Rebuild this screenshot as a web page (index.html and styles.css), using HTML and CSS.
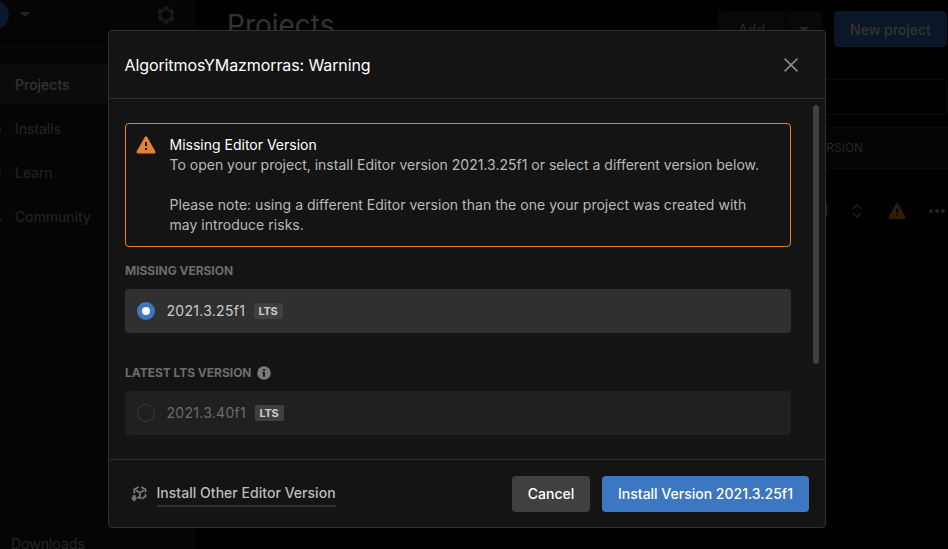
FILE: index.html
```html
<!DOCTYPE html>
<html lang="en">
<head>
<meta charset="utf-8">
<title>Projects</title>
<link rel="stylesheet" href="styles.css">
</head>
<body>
<div class="app">
  <aside class="sidebar">
    <div class="account">
      <span class="avatar"></span>
      <span class="caret"></span>
      <svg class="gear" width="20" height="20" viewBox="0 0 20 20" fill="none" stroke="currentColor"><circle cx="10" cy="10" r="5.9" stroke-width="2.4"/><path d="M10 1.3v3M10 15.7v3M2.5 5.6l2.6 1.5M14.9 12.9l2.6 1.5M2.5 14.4l2.6-1.5M14.9 7.1l2.6-1.5" stroke-width="4.6"/></svg>
    </div>
    <nav class="nav">
      <a class="item active">Projects</a>
      <a class="item"><i class="stub stub-a"></i>Installs</a>
      <a class="item"><i class="stub stub-b"></i>Learn</a>
      <a class="item"><i class="stub stub-c"></i>Community</a>
    </nav>
    <div class="downloads">Downloads</div>
  </aside>
  <main class="main">
    <div class="topbar">
      <h1>Projects</h1>
      <div class="split"><span class="add">Add</span><span class="more"><i class="caret"></i></span></div>
      <span class="new">New project</span>
    </div>
    <div class="search"></div>
    <div class="thead"><span>EDITOR VERSION</span></div>
    <div class="row">
      <span class="ver">2021.3.25f1</span>
      <svg class="updown" width="10" height="14" viewBox="0 0 10 14" fill="none" stroke="currentColor" stroke-width="1.3"><path d="M1 4.8L5 1l4 3.8M1 9.2L5 13l4-3.8"/></svg>
      <svg class="warn" width="18" height="16" viewBox="0 0 20 18"><path d="M8.7 1.2Q10-.8 11.3 1.2L19.3 15.6Q20.2 17.8 18 18H2Q-.2 17.8.7 15.6Z" fill="currentColor"/><path d="M9 6h2v5H9zM9 12.6h2v2H9z" fill="#030303"/></svg>
      <span class="dots"><i></i><i></i><i></i></span>
    </div>
  </main>
</div>

<section class="modal">
  <header class="modal-head">
    <h2>AlgoritmosYMazmorras: Warning</h2>
    <svg width="14" height="14" viewBox="0 0 14 14" fill="none" stroke="#888" stroke-width="1.7"><path d="M.6.6l12.8 12.8M13.4.6L.6 13.4"/></svg>
  </header>
  <div class="modal-body">
    <div class="alert">
      <svg width="20" height="18" viewBox="0 0 20 18"><path d="M8.7 1.2Q10-.8 11.3 1.2L19.3 15.2Q20.2 17.2 18 17.4H2Q-.2 17.2.7 15.2Z" fill="#e08432"/><path d="M9 6h2v4H9zM9 12h2v2H9z" fill="#141414"/></svg>
      <div class="alert-text">
        <strong>Missing Editor Version</strong>
        <p>To open your project, install Editor version 2021.3.25f1 or select a different version below.</p>
        <p class="note">Please note: using a different Editor version than the one your project was created with may introduce risks.</p>
      </div>
    </div>
    <h3>MISSING VERSION</h3>
    <div class="option selected"><span class="radio"></span><span class="name">2021.3.25f1</span><span class="tag">LTS</span></div>
    <h3 class="second">LATEST LTS VERSION
      <svg width="14" height="14" viewBox="0 0 14 14"><circle cx="7" cy="7" r="6.8" fill="#7a7a7a"/><path d="M6 3.2h2v1.9H6zM5.3 6h2.6v4.8H6V7.2h-.7z" fill="#141414"/></svg>
    </h3>
    <div class="option"><span class="radio"></span><span class="name">2021.3.40f1</span><span class="tag">LTS</span></div>
    <span class="thumb"></span>
  </div>
  <footer class="modal-foot">
    <svg width="16" height="16" viewBox="0 0 16 16" fill="none" stroke="#777" stroke-width="1.8"><path d="M7.6 1L3.3 3.4V7.6M10.2 1L14.5 3.4V6.2M14.5 8V10.4L10.6 12.8M6.4 11l2.5 1.6M5 4.4l3.9 2.3 3.9-2.3M8.9 6.4V13"/><path d="M1.4 9.2h3.4v2.6H6.4L3.1 15.8-.1 11.8H1.4z" fill="#777" stroke="none"/></svg>
    <a class="link">Install Other Editor Version</a>
    <span class="btn cancel">Cancel</span>
    <span class="btn primary">Install Version 2021.3.25f1</span>
  </footer>
</section>
</body>
</html>
```

FILE: styles.css
```css
* { box-sizing: border-box; margin: 0; padding: 0; }
body { width: 948px; height: 549px; overflow: hidden; background: #010101; font: 14px/20px Inter, sans-serif; color: #ccc; }
.app { display: flex; height: 549px; color: #252525; }
.sidebar { width: 195px; flex: none; display: flex; flex-direction: column; background: #050505; border-right: 1px solid #0b0b0b; }
.account { display: flex; align-items: center; height: 48px; padding-bottom: 18px; border-bottom: 1px solid #0b0b0b; }
.avatar { width: 30px; height: 30px; margin-left: -21px; border-radius: 50%; background: #0b182a; }
.caret { width: 0; height: 0; border: 5px solid transparent; border-bottom: 0; border-top-color: #252525; }
.account .caret { margin-left: 11px; }
.gear { margin-left: 126px; color: #1a1a1a; }
.nav { padding-top: 16px; flex: 1; }
.item { position: relative; display: flex; align-items: center; height: 44px; padding-left: 15px; font-weight: 500; letter-spacing: -.15px; color: #202020; }
.item.active { height: 40px; margin-bottom: 3px; background: #0b0b0b; color: #343434; padding-top: 1px; letter-spacing: 0; }
.stub { position: absolute; left: -5px; width: 6px; height: 6px; background: #161616; top: 20px; }
.stub-b { border-radius: 2px; top: 17px; }
.stub-c { border-radius: 3px; left: -4px; top: 23px; height: 4px; }
.downloads { height: 39px; padding: 23px 0 0 11px; border-top: 1px solid #0b0b0b; font-weight: 400; }
.main { flex: 1; min-width: 0; padding: 11px 1px 0 32px; }
.topbar { display: flex; height: 36px; }
h1 { font-size: 28px; line-height: 29px; font-weight: 400; flex: 1; color: #333; }
.split { display: flex; gap: 1px; width: 104px; margin-right: 12px; font-weight: 500; }
.add { width: 67px; background: #080808; border-radius: 4px 0 0 4px; text-align: center; line-height: 37px; }
.more { flex: 1; background: #080808; border-radius: 0 4px 4px 0; display: flex; justify-content: center; padding-top: 16px; }
.new { width: 113px; border-radius: 4px; background: #0b1729; color: #343434; text-align: center; font-weight: 500; line-height: 37px; }
.search { height: 36px; margin-top: 32px; border: 1px solid #0b0b0b; border-radius: 4px; }
.thead { height: 42px; margin: 12px -1px 0 0; padding-left: 537px; border: 1px solid #0a0a0a; border-width: 1px 0; background: #040404; font-size: 12px; line-height: 40px; white-space: nowrap; }
.row { display: flex; align-items: center; height: 84px; padding-left: 526px; white-space: nowrap; }
.ver { width: 75px; text-align: right; }
.updown { margin-left: 24px; color: #202020; flex: none; }
.warn { margin-left: 26px; color: #351b05; flex: none; }
.dots { display: flex; gap: 2px; margin-left: 23px; }
.dots i { width: 4px; height: 4px; border-radius: 2px; background: #252525; }

.modal { position: absolute; left: 108px; top: 30px; width: 718px; height: 498px; display: flex; flex-direction: column; background: #141414; border: 1px solid #303030; border-radius: 4px; }
.modal-head { display: flex; align-items: center; justify-content: space-between; height: 68px; padding: 0 27px 0 15.5px; border-bottom: 1px solid #303030; }
h2 { font-size: 16px; font-weight: 400; letter-spacing: -.1px; color: #fff; line-height: 24px; }
.modal-body { position: relative; height: 361px; padding: 24px 34px 0 16px; border-bottom: 1px solid #303030; }
.alert { display: flex; gap: 13.5px; height: 124px; padding: 11px 20px 0 10px; border: 1px solid #e08432; border-radius: 4px; }
.alert svg { flex: none; margin-top: 1px; }
.alert strong { display: block; font-weight: 400; color: #fff; }
.alert p { color: #b9b9b9; }
.alert .note { margin-top: 20px; letter-spacing: .03px; }
h3 { display: flex; align-items: center; gap: 6px; height: 42px; padding-top: 5px; font-size: 12px; line-height: 16px; font-weight: 700; letter-spacing: -.02px; color: #6c6c6c; }
.second { margin-top: 16px; }
.option { display: flex; align-items: center; height: 44px; padding-left: 12px; border-radius: 4px; background: #202020; color: #6c6c6c; }
.selected { background: #303030; color: #ccc; }
.radio { width: 18px; height: 18px; border: 1px solid #3a3a3a; border-radius: 50%; }
.selected .radio { border: 5px solid #3d77c2; background: #fff; }
.name { width: 79px; margin: 0 9px 0 11.5px; font-weight: 400; letter-spacing: .28px; }
.selected .name { margin-right: 8px; }
.tag { width: 29px; height: 16px; border-radius: 2px; background: #404040; color: #ccc; font-size: 11px; line-height: 16px; font-weight: 700; text-align: center; letter-spacing: -.2px; }
.thumb { position: absolute; right: 6px; top: 6px; width: 6px; height: 259px; border-radius: 3px; background: #404040; }
.modal-foot { display: flex; align-items: center; flex: 1; padding: 0 16px 0 22px; }
.link { margin: 3px auto 0 9.5px; font-weight: 500; border-bottom: 2px solid #303030; padding-bottom: 2px; color: #bdbdbd; letter-spacing: .03px; }
.btn { height: 36px; border-radius: 4px; text-align: center; font-weight: 500; line-height: 36px; color: #fff; }
.cancel { width: 78px; margin-right: 12px; background: #404040; }
.primary { width: 207px; background: #3d77c2; }
```
